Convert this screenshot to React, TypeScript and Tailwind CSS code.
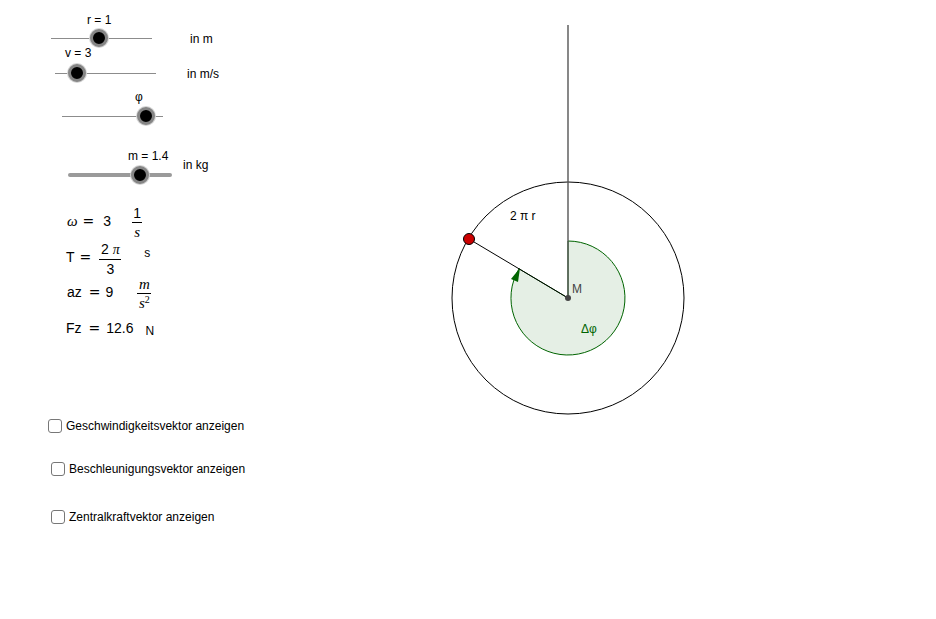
import React from "react";

type SliderProps = {
  label: string;
  top: string;
  left: string;
  labelPad: string;
  gap: string;
  track: string;
  trackW: number;
  knob: number;
  unit?: string;
  unitCls?: string;
};

function Knob({ x }: { x: number }) {
  return (
    <span
      className="absolute top-1/2 -translate-x-1/2 -translate-y-1/2 w-[18px] h-[18px] rounded-full bg-black border-[3px] border-[#858585] shadow-[0_0_0_1px_#d4d4d4]"
      style={{ left: x }}
    />
  );
}

function Slider({ label, top, left, labelPad, gap, track, trackW, knob, unit, unitCls }: SliderProps) {
  return (
    <div className={`${top} ${left}`}>
      <div className={`${labelPad} leading-[14px]`}>{label}</div>
      <div className={`${gap} flex h-[18px] items-center`}>
        <div className={`relative shrink-0 ${track}`} style={{ width: trackW }}>
          <Knob x={knob} />
        </div>
        {unit && <span className={unitCls}>{unit}</span>}
      </div>
    </div>
  );
}

function Frac({ num, den, bar }: { num: React.ReactNode; den: React.ReactNode; bar: string }) {
  return (
    <span className="inline-flex flex-col items-center">
      <span className="leading-[14px]">{num}</span>
      <span className={`my-[2px] h-px bg-black ${bar}`} />
      <span className="leading-[14px]">{den}</span>
    </span>
  );
}

const serif = "font-['Liberation_Serif',serif] italic";
const eq = "font-['DejaVu_Sans',sans-serif] text-[14px]";

function Checkbox({ label, cls }: { label: string; cls: string }) {
  return (
    <div className={`flex h-[16px] items-center ${cls}`}>
      <span className="h-[14px] w-[14px] shrink-0 rounded-[3px] border border-[#777] bg-white" />
      <span className="ml-[4px] text-[12px]">{label}</span>
    </div>
  );
}

export default function App() {
  return (
    <div className="flex h-[619px] w-[936px] overflow-hidden bg-white font-['Liberation_Sans',Arial,sans-serif] text-[12px] text-black">
      <div className="w-[440px] shrink-0">
        <Slider label="r = 1" top="mt-[13px]" left="ml-[51px]" labelPad="pl-[36px]" gap="mt-[2px]" track="h-px bg-[#8c8c8c]" trackW={101} knob={48} unit="in m" unitCls="ml-[38px] translate-y-px" />
        <Slider label="v = 3" top="-mt-px" left="ml-[55px]" labelPad="pl-[10px]" gap="mt-[4px]" track="h-px bg-[#8c8c8c]" trackW={101} knob={22} unit="in m/s" unitCls="ml-[31px] translate-y-px" />
        <Slider label="φ" top="mt-[8px]" left="ml-[62px]" labelPad="pl-[73px]" gap="mt-[3px]" track="h-px bg-[#8c8c8c]" trackW={101} knob={84} />
        <Slider label="m = 1.4" top="mt-[24px]" left="ml-[68px]" labelPad="pl-[60px]" gap="mt-[3px]" track="h-[4px] rounded-full bg-[#9a9a9a]" trackW={104} knob={72} unit="in kg" unitCls="ml-[11px] -translate-y-[10px]" />

        <div className="text-[14px]">
          <div className="mt-[21px] flex h-[32px] items-center pl-[67px]">
            <span className={`${serif} text-[15px]`}>ω</span>
            <span className={`ml-[5px] ${eq}`}>=</span>
            <span className="ml-[9px]">3</span>
            <span className="ml-[21px]">
              <Frac num="1" den={<span className={`${serif} text-[15px]`}>s</span>} bar="w-[10px]" />
            </span>
          </div>
          <div className="mt-[4px] flex h-[32px] items-center pl-[66px]">
            <span>T</span>
            <span className={`ml-[5px] ${eq}`}>=</span>
            <span className="ml-[8px]">
              <Frac
                num={
                  <span>
                    2 <span className={serif}>π</span>
                  </span>
                }
                den="3"
                bar="w-[22px]"
              />
            </span>
            <span className="ml-[23px] -translate-y-[4px] text-[12px]">s</span>
          </div>
          <div className="mt-[3px] flex h-[32px] items-center pl-[67px]">
            <span>az</span>
            <span className={`ml-[7px] ${eq}`}>=</span>
            <span className="ml-[5px]">9</span>
            <span className="ml-[24px]">
              <Frac
                num={<span className={`${serif} text-[15px]`}>m</span>}
                den={
                  <span className={`${serif} text-[15px]`}>
                    s<sup className="text-[10px] not-italic font-['Liberation_Serif',serif]">2</sup>
                  </span>
                }
                bar="w-[14px]"
              />
            </span>
          </div>
          <div className="mt-[4px] flex h-[32px] items-center pl-[66px]">
            <span>Fz</span>
            <span className={`ml-[7px] ${eq}`}>=</span>
            <span className="ml-[6px]">12.6</span>
            <span className="ml-[12px] translate-y-[3px] text-[12px]">N</span>
          </div>
        </div>

        <Checkbox label="Geschwindigkeitsvektor anzeigen" cls="mt-[74px] ml-[48px]" />
        <Checkbox label="Beschleunigungsvektor anzeigen" cls="mt-[27px] ml-[51px]" />
        <Checkbox label="Zentralkraftvektor anzeigen" cls="mt-[32px] ml-[51px]" />
      </div>

      <svg width="496" height="619" viewBox="440 0 496 619" className="shrink-0">
        <path
          d="M 568 298 L 568 241 A 57 57 0 1 1 519 268.8 Z"
          fill="#006400"
          fillOpacity="0.1"
          stroke="#006400"
          strokeWidth="1"
        />
        <polygon points="520,268 511,279 518,282" fill="#006400" />
        <circle cx="568" cy="298" r="116" fill="none" stroke="#000" strokeWidth="1" />
        <line x1="568" y1="25" x2="568" y2="298" stroke="#555" strokeWidth="1.4" />
        <line x1="469" y1="239" x2="568" y2="298" stroke="#000" strokeWidth="1" />
        <circle cx="568" cy="298" r="3" fill="#444" />
        <circle cx="469" cy="239" r="5.5" fill="#cc0000" stroke="#000" strokeWidth="1" />
        <text x="510" y="220" fontSize="12" fontFamily="Liberation Sans, Arial, sans-serif" fill="#000">
          2 π r
        </text>
        <text x="572" y="293" fontSize="12" fontFamily="Liberation Sans, Arial, sans-serif" fill="#444">
          M
        </text>
        <text x="581" y="333" fontSize="12" fontFamily="Liberation Sans, Arial, sans-serif" fill="#006400">
          Δφ
        </text>
      </svg>
    </div>
  );
}
